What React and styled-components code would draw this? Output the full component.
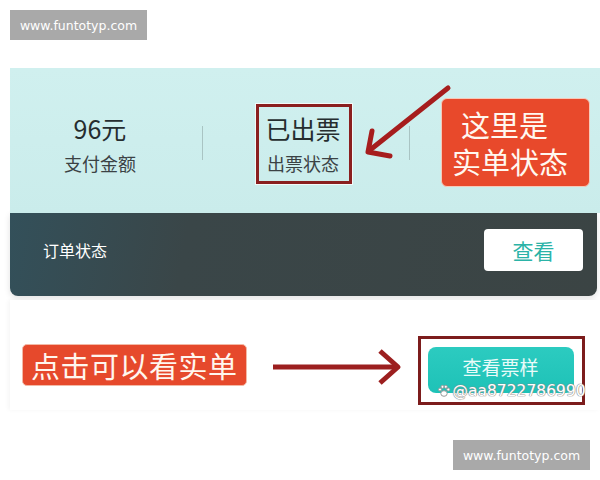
import styled, { createGlobalStyle } from "styled-components"

const GlobalStyle = createGlobalStyle`
  html, body {
    margin: 0;
    padding: 0;
    background: #ffffff;
  }
  body {
    font-family: "Noto Sans CJK SC", "Noto Sans", sans-serif;
  }
`

function App() {
  return (
    <Page>
      <GlobalStyle />
      <SiteMark>www.funtotyp.com</SiteMark>

      <Card>
        <StatsPanel>
          <Stat width={180}>
            <StatValue>96元</StatValue>
            <StatLabel>支付金额</StatLabel>
          </Stat>
          <Divider />
          <Stat width={200}>
            <StatValue>已出票</StatValue>
            <StatLabel>出票状态</StatLabel>
          </Stat>
          <Divider gap={6} />

          <HighlightBox left={246} top={36} width={96} height={80} />
          <ArrowSvg width="110" height="90" viewBox="0 0 110 90" style={{ left: 340, top: 14 }}>
            <line x1="98" y1="6" x2="20" y2="68" stroke="#a61d1d" strokeWidth="5" strokeLinecap="round" />
            <polyline points="22,49 18,70 40,74" fill="none" stroke="#a61d1d" strokeWidth="5" strokeLinecap="round" strokeLinejoin="round" />
          </ArrowSvg>
          <Callout>
            <CalloutLine indent={9}>这里是</CalloutLine>
            <CalloutLine>实单状态</CalloutLine>
          </Callout>
        </StatsPanel>

        <ActionBar>
          <BarTitle>订单状态</BarTitle>
          <ViewButton>查看</ViewButton>
        </ActionBar>
      </Card>

      <BottomPanel>
        <Tag>点击可以看实单</Tag>
        <svg width="140" height="40" viewBox="0 0 140 40" style={{ marginLeft: 18, marginTop: 4 }}>
          <line x1="8" y1="20" x2="132" y2="20" stroke="#9c1f1f" strokeWidth="5" />
          <polyline points="115,4 133,20 115,36" fill="none" stroke="#9c1f1f" strokeWidth="5" strokeLinejoin="round" />
        </svg>
        <ButtonFrame>
          <TicketButton>查看票样</TicketButton>
          <Handle>
            <svg width="14" height="14" viewBox="0 0 14 14">
              <g fill="#fff" stroke="#9a9a9a" strokeWidth="1">
                <ellipse cx="7" cy="9.5" rx="3.2" ry="2.8" />
                <circle cx="3" cy="5.5" r="1.5" />
                <circle cx="5.5" cy="2.8" r="1.5" />
                <circle cx="8.8" cy="2.8" r="1.5" />
                <circle cx="11.3" cy="5.5" r="1.5" />
              </g>
            </svg>
            @aa8722786990
          </Handle>
        </ButtonFrame>
      </BottomPanel>

      <SiteMark right>www.funtotyp.com</SiteMark>
    </Page>
  )
}

const Page = styled.div`
  position: relative;
  width: 600px;
  height: 480px;
  overflow: hidden;
  padding-top: 10px;
  box-sizing: border-box;
`

const SiteMark = styled.div`
  width: 137px;
  height: 30px;
  margin-left: ${p => (p.right ? "453px" : "10px")};
  margin-top: ${p => (p.right ? "30px" : "0")};
  background: #a9a9a9;
  color: #ffffff;
  font-family: "DejaVu Sans", sans-serif;
  font-size: 12.5px;
  display: flex;
  align-items: center;
  justify-content: center;
`

const Card = styled.div`
  margin-top: 28px;
  margin-left: 10px;
  width: 590px;
`

const StatsPanel = styled.div`
  position: relative;
  height: 145px;
  background: linear-gradient(180deg, #d0f0ef 0%, #caeceb 100%);
  display: flex;
  align-items: center;
`

const Stat = styled.div`
  width: ${p => p.width}px;
  display: flex;
  flex-direction: column;
  align-items: center;
  color: #262d2f;
  margin-top: 6px;
`

const StatValue = styled.div`
  font-size: 25px;
  line-height: 36px;
  margin-bottom: 2px;
`

const StatLabel = styled.div`
  font-size: 18px;
  line-height: 30px;
  color: #3b4244;
`

const Divider = styled.div`
  width: 1px;
  height: 34px;
  background: #a9c4c3;
  margin-left: ${p => p.gap || 12}px;
  margin-top: 4px;
`

const HighlightBox = styled.div`
  position: absolute;
  left: ${p => p.left}px;
  top: ${p => p.top}px;
  width: ${p => p.width}px;
  height: ${p => p.height}px;
  border: 3px solid #8a1f1f;
  box-sizing: border-box;
  box-shadow: 0 0 0 1px #f3f9f8;
`

const ArrowSvg = styled.svg`
  position: absolute;
`

const Callout = styled.div`
  position: absolute;
  left: 431px;
  top: 30px;
  width: 149px;
  height: 89px;
  box-sizing: border-box;
  background: #e8492b;
  border: 1px solid #f6c9b9;
  border-radius: 6px;
  color: #fff8f0;
  display: flex;
  flex-direction: column;
  justify-content: center;
  padding-left: 10px;
`

const CalloutLine = styled.div`
  font-size: 29px;
  line-height: 37px;
  padding-left: ${p => p.indent || 0}px;
`

const ActionBar = styled.div`
  height: 83px;
  margin-right: 3px;
  border-radius: 0 0 8px 8px;
  background: linear-gradient(100deg, #33505a 0%, #3a4648 30%, #3b4444 100%);
  box-shadow: 0 2px 6px rgba(0, 0, 0, 0.12);
  display: flex;
  align-items: center;
  justify-content: space-between;
  padding: 0 14px 9px 33px;
  box-sizing: border-box;
`

const BarTitle = styled.div`
  color: #ffffff;
  font-size: 16px;
`

const ViewButton = styled.div`
  width: 99px;
  height: 42px;
  background: #ffffff;
  border-radius: 4px;
  color: #2bb3a7;
  font-size: 21px;
  display: flex;
  align-items: center;
  justify-content: center;
`

const BottomPanel = styled.div`
  margin-top: 4px;
  margin-left: 10px;
  height: 110px;
  box-sizing: border-box;
  padding: 20px 0 0 12px;
  background: #ffffff;
  box-shadow: -2px 0 4px rgba(0, 0, 0, 0.04);
  display: flex;
  align-items: center;
`

const Tag = styled.div`
  height: 40px;
  padding: 0 8px;
  background: #e6492c;
  border: 1px solid #f3b9a6;
  border-radius: 5px;
  color: #fff6ee;
  font-size: 29px;
  line-height: 40px;
  letter-spacing: 0.5px;
`

const ButtonFrame = styled.div`
  position: relative;
  width: 167px;
  height: 69px;
  box-sizing: border-box;
  border: 3px solid #7c1c1c;
  margin: 10px 0 0 13px;
  padding: 8px 0 0 7px;
`

const TicketButton = styled.div`
  width: 146px;
  height: 46px;
  border-radius: 8px;
  background: linear-gradient(180deg, #2ccbc0 0%, #1ec2b7 100%);
  color: #e9fbf9;
  font-size: 19px;
  display: flex;
  align-items: center;
  justify-content: center;
  padding-bottom: 6px;
  box-sizing: border-box;
`

const Handle = styled.div`
  position: absolute;
  left: 16px;
  top: 43px;
  display: flex;
  align-items: center;
  gap: 2px;
  font-family: "DejaVu Sans", sans-serif;
  font-size: 15.5px;
  color: #ffffff;
  text-shadow: 0 0 1px #888, 0 0 1px #888, 0 0 1px #888;
  white-space: nowrap;
`

export default App
